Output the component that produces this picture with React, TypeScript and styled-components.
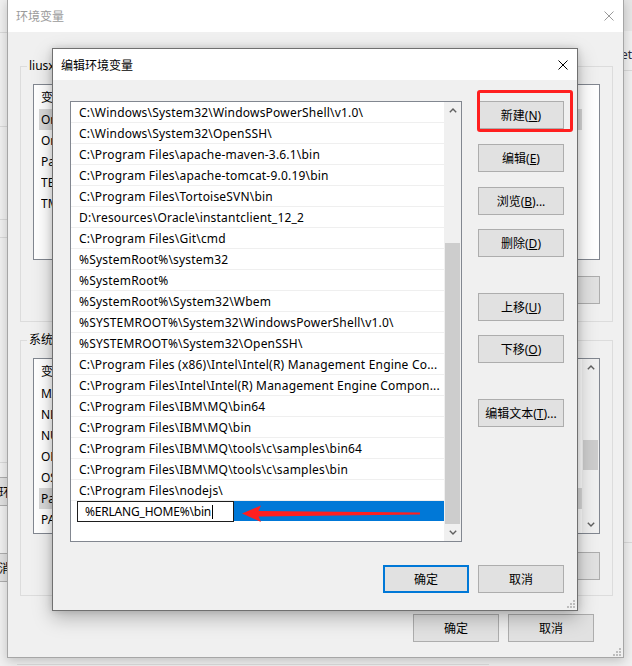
import React from "react";
import styled, { createGlobalStyle } from "styled-components";

const UI_FONT = `"Noto Sans", "Noto Sans CJK SC", sans-serif`;

const GlobalStyle = createGlobalStyle`
  * { box-sizing: border-box; }
  html, body { margin: 0; padding: 0; }
  body {
    width: 632px;
    height: 666px;
    overflow: hidden;
    background: #f0f0f0;
    font-family: ${UI_FONT};
    font-size: 12px;
    color: #000;
  }
`;

const Desktop = styled.div`
  position: relative;
  width: 632px;
  height: 666px;
  overflow: hidden;
  background: #f0f0f0;
`;

/* ---------- window behind everything (mostly hidden) ---------- */
const BackLayer = styled.div`
  position: absolute;
  inset: 0;
  display: grid;
  grid-template-columns: 7px 1fr 8px;
`;

const BackStrip = styled.div`
  display: flex;
  flex-direction: column;
  overflow: hidden;
  min-width: 0;
`;

const BackRule = styled.div<{ $mt: number }>`
  flex: none;
  height: 1px;
  margin-top: ${(p) => p.$mt}px;
  background: #d9d9d9;
`;

const BackButton = styled.div<{ $mt: number; $textX: number }>`
  flex: none;
  align-self: flex-start;
  margin-top: ${(p) => p.$mt}px;
  margin-left: -40px;
  width: 120px;
  height: 29px;
  border: 1px solid #adadad;
  background: #e1e1e1;
  display: flex;
  align-items: center;
  padding-left: ${(p) => p.$textX}px;
  white-space: nowrap;
`;

const BackTitleShade = styled.div`
  flex: none;
  height: 31px;
  background: #e6e6e6;
`;

const BackLabel = styled.div`
  flex: none;
  margin-top: 15px;
  height: 16px;
  display: flex;
  justify-content: flex-end;
  align-items: center;
  white-space: nowrap;
  color: #2b2b3a;
`;

const BackBottom = styled.div`
  display: flex;
  flex-direction: column;
  justify-content: flex-end;
`;

const BottomRule = styled.div`
  height: 1px;
  width: 472px;
  margin: 0 0 1px 10px;
  background: #dcdcdc;
`;

/* ---------- windows ---------- */
const Win = styled.div<{ $x: number; $y: number; $w: number; $h: number; $active?: boolean }>`
  position: absolute;
  left: ${(p) => p.$x}px;
  top: ${(p) => p.$y}px;
  width: ${(p) => p.$w}px;
  height: ${(p) => p.$h}px;
  display: flex;
  flex-direction: column;
  background: #f0f0f0;
  border: 1px solid ${(p) => (p.$active ? "#707070" : "#a6a6a6")};
  box-shadow: ${(p) =>
    p.$active
      ? "0 7px 18px rgba(0,0,0,0.26), 0 0 7px rgba(0,0,0,0.14)"
      : "0 3px 10px rgba(0,0,0,0.2)"};
`;

const TitleBar = styled.div<{ $h: number; $active?: boolean }>`
  flex: none;
  height: ${(p) => p.$h}px;
  background: #fff;
  display: flex;
  align-items: center;
  padding-left: 8px;
  color: ${(p) => (p.$active ? "#000" : "#9a9a9a")};
`;

const TitleText = styled.span`
  flex: 1;
  white-space: nowrap;
`;

const CloseBox = styled.div`
  flex: none;
  width: 28px;
  height: 100%;
  display: flex;
  align-items: center;
  justify-content: center;
`;

const CloseIcon = () => (
  <svg width="10" height="10" viewBox="0 0 10 10">
    <path d="M0.5 0.5 L9.5 9.5 M9.5 0.5 L0.5 9.5" stroke="currentColor" strokeWidth="1" fill="none" />
  </svg>
);

const GripMark = styled.svg<{ $r: number; $b: number }>`
  position: absolute;
  right: ${(p) => p.$r}px;
  bottom: ${(p) => p.$b}px;
`;

const Grip = ({ r, b }: { r: number; b: number }) => (
  <GripMark $r={r} $b={b} width="9" height="9" viewBox="0 0 9 9">
    {[
      [6, 0],
      [3, 3],
      [6, 3],
      [0, 6],
      [3, 6],
      [6, 6],
    ].map(([x, y]) => (
      <rect key={`${x}-${y}`} x={x} y={y} width="2" height="2" fill="#bdbdbd" />
    ))}
  </GripMark>
);

/* ---------- buttons ---------- */
const DlgButton = styled.button<{ $mt?: number; $default?: boolean }>`
  flex: none;
  margin: ${(p) => p.$mt ?? 0}px 0 0 0;
  width: 86px;
  height: 28px;
  padding: 0;
  font-family: ${UI_FONT};
  font-size: 12px;
  color: #000;
  background: #e1e1e1;
  border: ${(p) => (p.$default ? "2px solid #0078d7" : "1px solid #adadad")};
  border-radius: 0;
  display: flex;
  align-items: center;
  justify-content: center;
  white-space: nowrap;
  u {
    text-decoration: underline;
    text-underline-offset: 1px;
  }
`;

/* ---------- outer dialog ---------- */
const OuterBody = styled.div`
  flex: 1;
  display: flex;
  flex-direction: column;
  padding: 26px 10px 0 12px;
`;

const Group = styled.fieldset<{ $mt?: number; $pb: number }>`
  margin: ${(p) => p.$mt ?? 0}px 0 0 0;
  padding: 0 12px ${(p) => p.$pb}px 12px;
  border: 1px solid #dcdcdc;
  min-width: 0;
`;

const Legend = styled.legend`
  padding: 0 2px;
  margin-left: -6px;
  line-height: 16px;
  font-size: 12px;
  white-space: nowrap;
`;

const ListView = styled.div`
  margin-top: 10px;
  height: 176px;
  border: 1px solid #828790;
  background: #fff;
  display: flex;
  overflow: hidden;
`;

const ListMain = styled.div`
  flex: 1;
  min-width: 0;
  display: flex;
  flex-direction: column;
  overflow: hidden;
`;

const ListHeader = styled.div`
  flex: none;
  height: 24px;
  display: flex;
  align-items: center;
  padding-left: 7px;
`;

const Cell = styled.div<{ $w?: number }>`
  flex: ${(p) => (p.$w ? "none" : "1")};
  width: ${(p) => (p.$w ? `${p.$w}px` : "auto")};
  white-space: nowrap;
  overflow: hidden;
`;

const VarRow = styled.div<{ $selected?: boolean }>`
  flex: none;
  width: 543px;
  height: 21px;
  margin-left: 5px;
  padding-left: 2px;
  display: flex;
  align-items: center;
  background: ${(p) => (p.$selected ? "#d9d9d9" : "transparent")};
`;

const ButtonRow = styled.div<{ $mt: number }>`
  margin-top: ${(p) => p.$mt}px;
  display: flex;
  justify-content: flex-end;
  gap: 10px;
`;

const OuterFooter = styled.div`
  margin-top: 18px;
  padding-right: 19px;
  display: flex;
  justify-content: flex-end;
  gap: 9px;
`;

/* ---------- scrollbar ---------- */
const ScrollBar = styled.div`
  flex: none;
  width: 17px;
  background: #f0f0f0;
  display: flex;
  flex-direction: column;
`;

const ScrollArrow = styled.div`
  flex: none;
  height: 17px;
  display: flex;
  align-items: center;
  justify-content: center;
`;

const ScrollTrack = styled.div`
  flex: 1;
  min-height: 0;
  padding: 0 1px;
`;

const ScrollThumb = styled.div<{ $top: number; $h: number }>`
  margin-top: ${(p) => p.$top}px;
  height: ${(p) => p.$h}px;
  background: #cdcdcd;
`;

const Chevron = ({ down }: { down?: boolean }) => (
  <svg width="8" height="5" viewBox="0 0 8 5">
    <path
      d={down ? "M0.8 0.8 L4 4 L7.2 0.8" : "M0.8 4.2 L4 1 L7.2 4.2"}
      stroke="#606060"
      strokeWidth="1.4"
      fill="none"
    />
  </svg>
);

const Scroller = ({ top, h }: { top: number; h: number }) => (
  <ScrollBar>
    <ScrollArrow>
      <Chevron />
    </ScrollArrow>
    <ScrollTrack>
      <ScrollThumb $top={top} $h={h} />
    </ScrollTrack>
    <ScrollArrow>
      <Chevron down />
    </ScrollArrow>
  </ScrollBar>
);

/* ---------- inner dialog ---------- */
const InnerBody = styled.div`
  flex: 1;
  display: flex;
  flex-direction: column;
  padding: 21px 13px 0 17px;
`;

const InnerGrid = styled.div`
  display: grid;
  grid-template-columns: 392px 86px;
  column-gap: 16px;
  align-items: start;
`;

const PathList = styled.div`
  height: 441px;
  border: 1px solid #828790;
  background: #fff;
  display: flex;
`;

const PathItems = styled.div`
  flex: 1;
  min-width: 0;
  display: flex;
  flex-direction: column;
  overflow: hidden;
`;

const PathItem = styled.div`
  flex: none;
  height: 21px;
  border-bottom: 1px solid #efefef;
  padding-left: 8px;
  display: flex;
  align-items: center;
  white-space: nowrap;
  overflow: hidden;
  letter-spacing: 0.2px;
`;

const EditRow = styled.div`
  position: relative;
  flex: none;
  height: 21px;
  display: flex;
  align-items: flex-start;
`;

const EditField = styled.div`
  flex: none;
  margin-left: 6px;
  width: 157px;
  height: 21px;
  border: 1px solid #1e1e1e;
  background: #fff;
  padding-left: 7px;
  display: flex;
  align-items: center;
  white-space: nowrap;
  letter-spacing: -0.2px;
`;

const Caret = styled.span`
  display: inline-block;
  width: 1px;
  height: 14px;
  margin-left: 1px;
  background: #000;
`;

const SelectionFill = styled.div`
  flex: 1;
  height: 20px;
  background: #0078d7;
`;

const ArrowMark = styled.svg`
  position: absolute;
  left: 171px;
  top: 3px;
  pointer-events: none;
`;

const SideButtons = styled.div`
  display: flex;
  flex-direction: column;
`;

const Annotated = styled.div`
  position: relative;
`;

const RedFrame = styled.div`
  position: absolute;
  left: -1px;
  top: -11px;
  width: 96px;
  height: 42px;
  border: 3px solid #ff1f1f;
  border-radius: 3px;
  pointer-events: none;
`;

const InnerFooter = styled.div`
  margin-top: 23px;
  display: flex;
  justify-content: flex-end;
  gap: 9px;
`;

const userVars: [string, string][] = [
  ["OneDrive", "C:\\Users\\liusx\\OneDrive"],
  ["OneDriveConsumer", "C:\\Users\\liusx\\OneDrive"],
  ["Path", "C:\\Users\\liusx\\AppData\\Local\\Microsoft\\WindowsApps;"],
  ["TEMP", "%USERPROFILE%\\AppData\\Local\\Temp"],
  ["TMP", "%USERPROFILE%\\AppData\\Local\\Temp"],
];

const sysVars: [string, string][] = [
  ["MAVEN_HOME", "C:\\Program Files\\apache-maven-3.6.1"],
  ["NLS_LANG", "SIMPLIFIED CHINESE_CHINA.ZHS16GBK"],
  ["NUMBER_OF_PROCESSORS", "8"],
  ["ORACLE_HOME", "D:\\resources\\Oracle\\instantclient_12_2"],
  ["OS", "Windows_NT"],
  ["Path", "C:\\Windows\\System32\\WindowsPowerShell\\v1.0\\;"],
  ["PATHEXT", ".COM;.EXE;.BAT;.CMD;.VBS;.VBE;.JS;.JSE;.WSF;.WSH;.MSC"],
];

const paths = [
  "C:\\Windows\\System32\\WindowsPowerShell\\v1.0\\",
  "C:\\Windows\\System32\\OpenSSH\\",
  "C:\\Program Files\\apache-maven-3.6.1\\bin",
  "C:\\Program Files\\apache-tomcat-9.0.19\\bin",
  "C:\\Program Files\\TortoiseSVN\\bin",
  "D:\\resources\\Oracle\\instantclient_12_2",
  "C:\\Program Files\\Git\\cmd",
  "%SystemRoot%\\system32",
  "%SystemRoot%",
  "%SystemRoot%\\System32\\Wbem",
  "%SYSTEMROOT%\\System32\\WindowsPowerShell\\v1.0\\",
  "%SYSTEMROOT%\\System32\\OpenSSH\\",
  "C:\\Program Files (x86)\\Intel\\Intel(R) Management Engine Co...",
  "C:\\Program Files\\Intel\\Intel(R) Management Engine Compon...",
  "C:\\Program Files\\IBM\\MQ\\bin64",
  "C:\\Program Files\\IBM\\MQ\\bin",
  "C:\\Program Files\\IBM\\MQ\\tools\\c\\samples\\bin64",
  "C:\\Program Files\\IBM\\MQ\\tools\\c\\samples\\bin",
  "C:\\Program Files\\nodejs\\",
];

export default function App() {
  return (
    <>
      <GlobalStyle />
      <Desktop>
        <BackLayer>
          <BackStrip>
            <BackRule $mt={32} />
            <BackRule $mt={93} />
            <BackRule $mt={92} />
            <BackRule $mt={17} />
            <BackRule $mt={224} />
            <BackButton $mt={14} $textX={38}>
              环境变量(<u>N</u>)...
            </BackButton>
            <BackButton $mt={47} $textX={26}>
              取消
            </BackButton>
          </BackStrip>
          <BackBottom>
            <BottomRule />
          </BackBottom>
          <BackStrip>
            <BackTitleShade />
            <BackLabel>Internet</BackLabel>
            <BackRule $mt={8} />
            <BackRule $mt={471} />
          </BackStrip>
        </BackLayer>

        {/* 环境变量 (inactive) */}
        <Win $x={7} $y={-1} $w={617} $h={659}>
          <TitleBar $h={32}>
            <TitleText>环境变量</TitleText>
            <CloseBox>
              <CloseIcon />
            </CloseBox>
          </TitleBar>
          <OuterBody>
            <Group $pb={17}>
              <Legend>
                liusx 的用户变量(<u>U</u>)
              </Legend>
              <ListView>
                <ListMain>
                  <ListHeader>
                    <Cell $w={150}>变量</Cell>
                    <Cell>值</Cell>
                  </ListHeader>
                  {userVars.map(([k, v], i) => (
                    <VarRow key={k} $selected={i === 0}>
                      <Cell $w={148}>{k}</Cell>
                      <Cell>{v}</Cell>
                    </VarRow>
                  ))}
                </ListMain>
              </ListView>
              <ButtonRow $mt={16}>
                <DlgButton>
                  新建(<u>N</u>)...
                </DlgButton>
                <DlgButton>
                  编辑(<u>E</u>)...
                </DlgButton>
                <DlgButton>
                  删除(<u>D</u>)
                </DlgButton>
              </ButtonRow>
            </Group>
            <Group $mt={10} $pb={15}>
              <Legend>
                系统变量(<u>S</u>)
              </Legend>
              <ListView>
                <ListMain>
                  <ListHeader>
                    <Cell $w={150}>变量</Cell>
                    <Cell>值</Cell>
                  </ListHeader>
                  {sysVars.map(([k, v], i) => (
                    <VarRow key={k} $selected={i === 5}>
                      <Cell $w={148}>{k}</Cell>
                      <Cell>{v}</Cell>
                    </VarRow>
                  ))}
                </ListMain>
                <Scroller top={64} h={30} />
              </ListView>
              <ButtonRow $mt={18}>
                <DlgButton>
                  新建(<u>W</u>)...
                </DlgButton>
                <DlgButton>
                  编辑(<u>I</u>)...
                </DlgButton>
                <DlgButton>
                  删除(<u>L</u>)
                </DlgButton>
              </ButtonRow>
            </Group>
            <OuterFooter>
              <DlgButton>确定</DlgButton>
              <DlgButton>取消</DlgButton>
            </OuterFooter>
          </OuterBody>
          <Grip r={1} b={0} />
        </Win>

        {/* 编辑环境变量 (active) */}
        <Win $x={52} $y={48} $w={526} $h={563} $active>
          <TitleBar $h={31} $active>
            <TitleText>编辑环境变量</TitleText>
            <CloseBox>
              <CloseIcon />
            </CloseBox>
          </TitleBar>
          <InnerBody>
            <InnerGrid>
              <PathList>
                <PathItems>
                  {paths.map((p) => (
                    <PathItem key={p}>{p}</PathItem>
                  ))}
                  <EditRow>
                    <EditField>
                      %ERLANG_HOME%\bin
                      <Caret />
                    </EditField>
                    <SelectionFill />
                    <ArrowMark width="180" height="18" viewBox="0 0 180 18">
                      <path
                        d="M0 9.5 L19 1.5 L16.5 7 L178 8.4 L178 10.6 L16.5 12.5 L19 18 Z"
                        fill="#ff1f1f"
                      />
                    </ArrowMark>
                  </EditRow>
                </PathItems>
                <Scroller top={124} h={281} />
              </PathList>
              <SideButtons>
                <Annotated>
                  <DlgButton>
                    新建(<u>N</u>)
                  </DlgButton>
                  <RedFrame />
                </Annotated>
                <DlgButton $mt={15}>
                  编辑(<u>E</u>)
                </DlgButton>
                <DlgButton $mt={15}>
                  浏览(<u>B</u>)...
                </DlgButton>
                <DlgButton $mt={14}>
                  删除(<u>D</u>)
                </DlgButton>
                <DlgButton $mt={36}>
                  上移(<u>U</u>)
                </DlgButton>
                <DlgButton $mt={14}>
                  下移(<u>O</u>)
                </DlgButton>
                <DlgButton $mt={36}>
                  编辑文本(<u>T</u>)...
                </DlgButton>
              </SideButtons>
            </InnerGrid>
            <InnerFooter>
              <DlgButton $default>确定</DlgButton>
              <DlgButton>取消</DlgButton>
            </InnerFooter>
          </InnerBody>
          <Grip r={1} b={1} />
        </Win>
      </Desktop>
    </>
  );
}
